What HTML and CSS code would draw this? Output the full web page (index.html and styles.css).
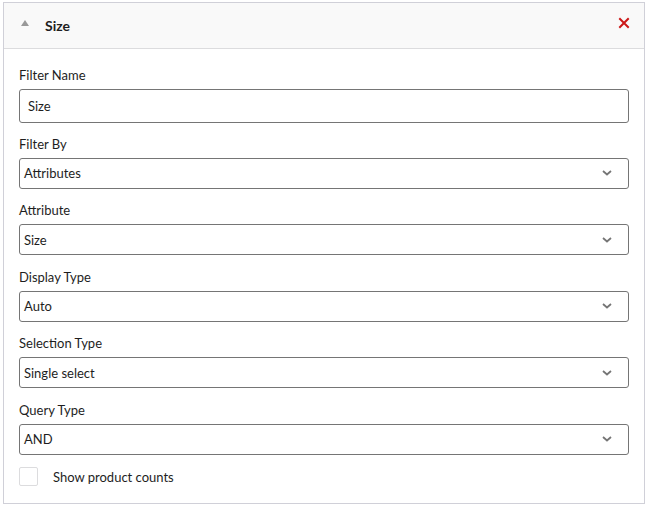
FILE: index.html
```html
<!DOCTYPE html>
<html>
<head>
<meta charset="utf-8">
<link rel="stylesheet" href="styles.css">
</head>
<body>
<div class="card">
  <div class="card-header">
    <span class="toggle"></span>
    <span class="title">Size</span>
    <span class="close">
      <svg width="12" height="12" viewBox="0 0 12 12"><path d="M2 2 L10 10 M10 2 L2 10" stroke="#cc1818" stroke-width="2" stroke-linecap="square"/></svg>
    </span>
  </div>
  <div class="card-body">
    <div class="field first">
      <label class="label">Filter Name</label>
      <div class="input">Size</div>
    </div>
    <div class="field">
      <label class="label">Filter By</label>
      <div class="select"><span>Attributes</span><span class="chev"><svg width="10" height="6" viewBox="0 0 10 6"><path d="M1 1 L5 4.5 L9 1" fill="none" stroke="#757575" stroke-width="1.8"/></svg></span></div>
    </div>
    <div class="field">
      <label class="label">Attribute</label>
      <div class="select"><span>Size</span><span class="chev"><svg width="10" height="6" viewBox="0 0 10 6"><path d="M1 1 L5 4.5 L9 1" fill="none" stroke="#757575" stroke-width="1.8"/></svg></span></div>
    </div>
    <div class="field">
      <label class="label">Display Type</label>
      <div class="select"><span>Auto</span><span class="chev"><svg width="10" height="6" viewBox="0 0 10 6"><path d="M1 1 L5 4.5 L9 1" fill="none" stroke="#757575" stroke-width="1.8"/></svg></span></div>
    </div>
    <div class="field">
      <label class="label">Selection Type</label>
      <div class="select"><span>Single select</span><span class="chev"><svg width="10" height="6" viewBox="0 0 10 6"><path d="M1 1 L5 4.5 L9 1" fill="none" stroke="#757575" stroke-width="1.8"/></svg></span></div>
    </div>
    <div class="field">
      <label class="label">Query Type</label>
      <div class="select"><span>AND</span><span class="chev"><svg width="10" height="6" viewBox="0 0 10 6"><path d="M1 1 L5 4.5 L9 1" fill="none" stroke="#757575" stroke-width="1.8"/></svg></span></div>
    </div>
    <div class="check-row">
      <span class="checkbox"></span>
      <span class="check-label">Show product counts</span>
    </div>
  </div>
</div>
</body>
</html>
```
FILE: styles.css
```css
* { box-sizing: border-box; }
html, body { margin: 0; padding: 0; background: #fff; }
body {
  padding: 2px 5px 0 3px;
  font-family: "Lato", "Open Sans", sans-serif;
  font-size: 13px;
  color: #1e1e1e;
}
.card {
  width: 642px;
  height: 502px;
  border: 1px solid #d0d0d8;
  display: flex;
  flex-direction: column;
}
.card-header {
  height: 46px;
  flex: none;
  background: #f9f9f9;
  border-bottom: 1px solid #dcdcde;
  display: flex;
  align-items: center;
  padding: 0 14px 0 17px;
}
.toggle {
  width: 0; height: 0;
  border-left: 4px solid transparent;
  border-right: 4px solid transparent;
  border-bottom: 6px solid #999;
  margin-right: 16px;
  margin-top: -5px;
}
.title {
  font-weight: 700;
  font-size: 14px;
  flex: 1;
  margin-top: -1px;
}
.close { display: flex; margin-top: -5px; }
.card-body {
  padding: 17px 15px 0 15px;
  display: flex;
  flex-direction: column;
}
.field { display: flex; flex-direction: column; margin-bottom: 12.5px; }
.field.first { margin-bottom: 11.5px; }
.label { line-height: 18px; margin-bottom: 5px; }
.input {
  height: 34px;
  border: 1px solid #757575;
  border-radius: 3px;
  padding: 0 8px;
  display: flex;
  align-items: center;
}
.select {
  height: 31px;
  border: 1px solid #757575;
  border-radius: 3px;
  padding: 0 16px 0 4px;
  display: flex;
  align-items: center;
  justify-content: space-between;
}
.chev { display: flex; }
.check-row { display: flex; align-items: center; margin-top: 0; }
.checkbox {
  width: 19px; height: 19px;
  border: 1px solid #dcdcde;
  border-radius: 2px;
  margin-right: 15px;
}
```
